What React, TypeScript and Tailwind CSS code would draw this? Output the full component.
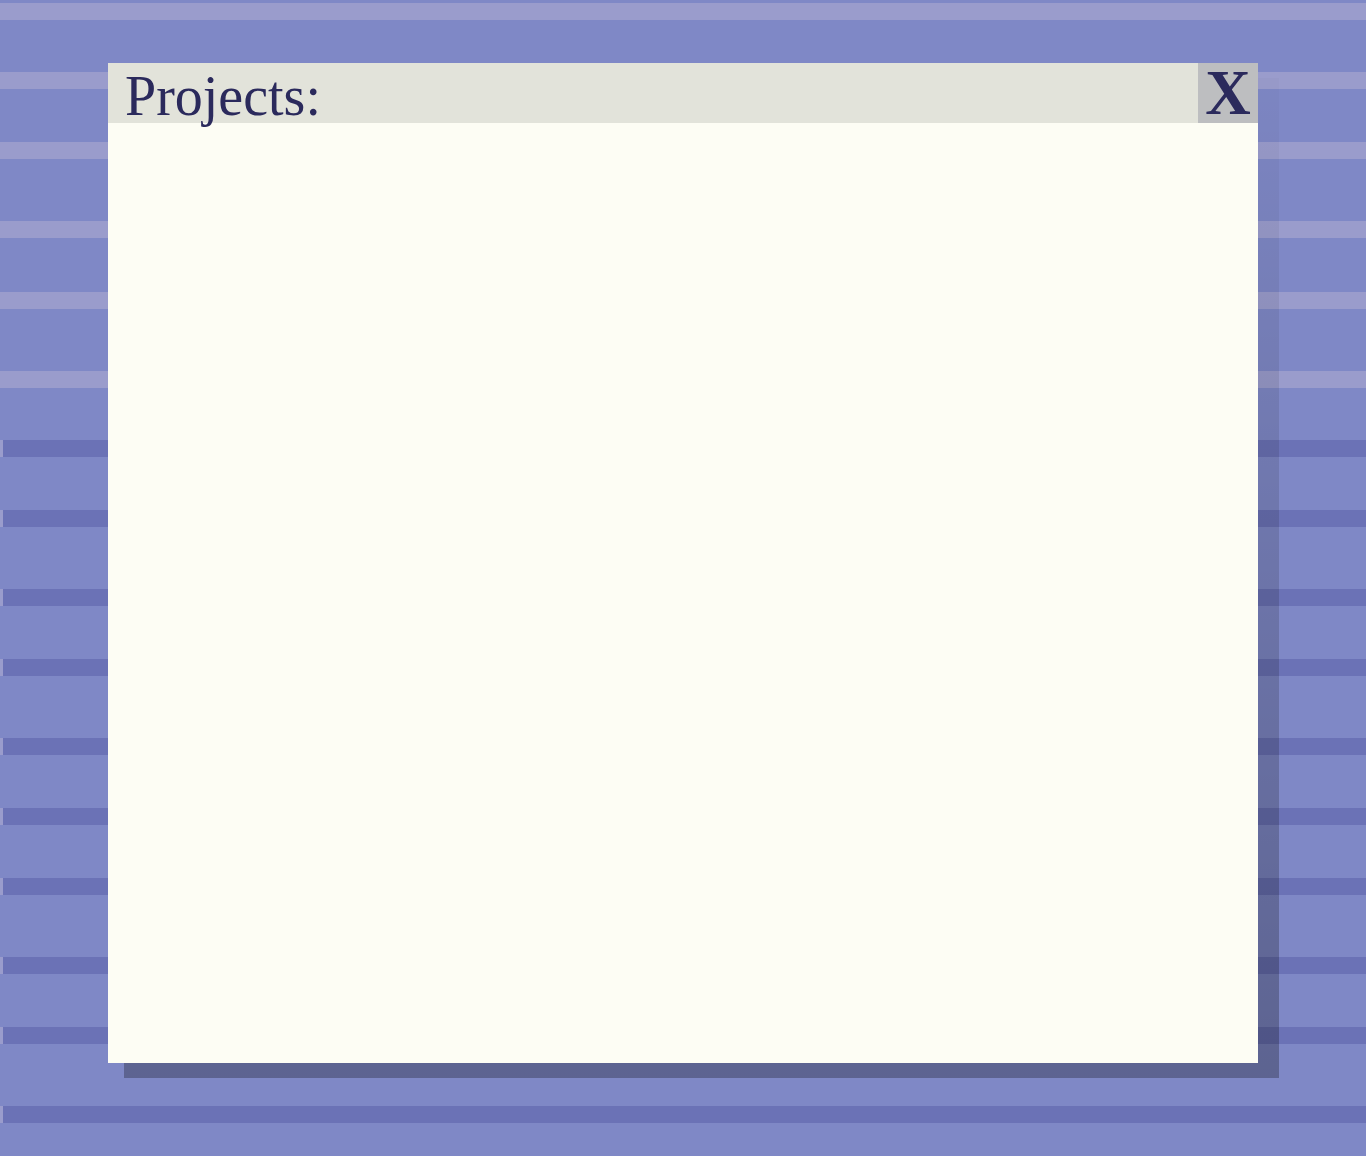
export default function App() {
  const light = [3, 72, 142, 221, 292, 371]
  const dark = [440, 510, 589, 659, 738, 808, 878, 957, 1027, 1106]

  return (
    <div className="relative h-[1156px] w-full overflow-hidden bg-[#7f88c6]">
      {/* background stripes */}
      <div className="absolute inset-0">
        {light.map((y) => (
          <div key={y} className="absolute left-0 right-0 h-[17px] bg-[#9a9ccc]" style={{ top: y }} />
        ))}
        {dark.map((y) => (
          <div
            key={y}
            className="absolute left-0 right-0 h-[17px] border-l-[3px] border-[#9a9ccc] bg-[#6b72b6]"
            style={{ top: y }}
          />
        ))}
      </div>

      {/* window */}
      <div className="relative ml-[108px] mt-[63px] w-[1150px]">
        <div className="absolute left-[16px] top-[15px] h-[1000px] w-[1155px] bg-gradient-to-b from-[rgba(0,0,0,0.02)] to-[rgba(0,0,0,0.27)]" />
        <div className="relative flex h-[1000px] flex-col bg-[#fdfdf4]">
          <div className="flex h-[60px] bg-[#e2e3da]">
            <div className="flex-1 pl-[17px] pt-[5px]">
              <span className="text-[56px] leading-none text-[#2b2a5c] [font-family:'Liberation_Serif',serif]">
                Projects:
              </span>
            </div>
            <button className="flex h-[60px] w-[60px] items-center justify-center bg-[#bdbec0] text-[63px] font-bold leading-none text-[#2b2a5c] [font-family:'Liberation_Serif',serif]">
              X
            </button>
          </div>
          <div className="flex-1" />
        </div>
      </div>
    </div>
  )
}
